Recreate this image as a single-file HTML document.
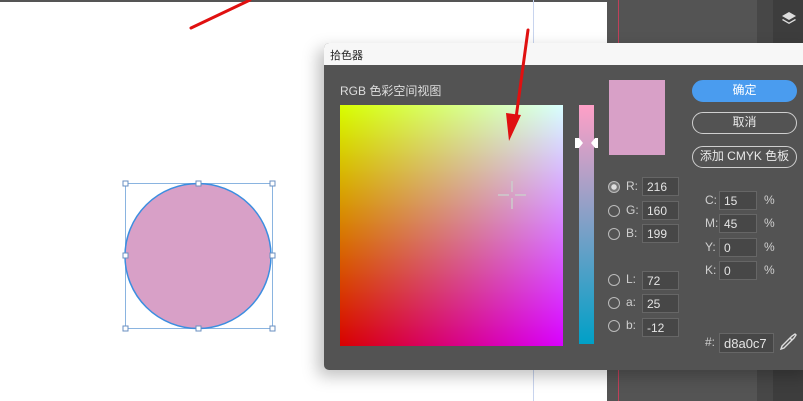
<!DOCTYPE html>
<html><head><meta charset="utf-8"><style>
*{margin:0;padding:0;box-sizing:border-box}
body{width:803px;height:401px;overflow:hidden;position:relative;background:#fff;font-family:"Liberation Sans","Noto Sans CJK SC",sans-serif;color:#d8d8d8}
.a{position:absolute}
.inp{position:absolute;background:#474747;border:1px solid #666;height:19px;font-size:12px;color:#e4e4e4;padding:2px 0 0 4px}
.lb{position:absolute;font-size:12px;color:#cfcfcf}
.rd{position:absolute;width:12px;height:12px;border:1px solid #bbb;border-radius:50%}
.btn{position:absolute;left:692px;width:105px;height:22px;border-radius:11px;border:1.5px solid #cfcfcf;font-size:12px;color:#e8e8e8;text-align:center;line-height:19px}
</style></head><body>
<div class="a" style="left:0;top:0;width:607px;height:2px;background:#555"></div>
<div class="a" style="left:533px;top:0;width:1px;height:401px;background:#c8d4ee"></div>
<!-- right dark panels -->
<div class="a" style="left:607px;top:0;width:150px;height:401px;background:#545454"></div>
<div class="a" style="left:618px;top:0;width:1px;height:401px;background:#c0405a"></div>
<div class="a" style="left:757px;top:0;width:16px;height:401px;background:#474747"></div>
<div class="a" style="left:773px;top:0;width:30px;height:401px;background:#3d3d3d"></div>
<svg class="a" style="left:780px;top:10px" width="18" height="18" viewBox="0 0 18 18"><path d="M9 2 L16 6 L9 10 L2 6Z" fill="#ddd"/><path d="M3 9 L9 12.5 L15 9 L16 10 L9 14 L2 10Z" fill="#ddd"/></svg>
<!-- circle -->
<svg class="a" style="left:118px;top:176px" width="162" height="160">
<rect x="7.5" y="7.5" width="147" height="145" fill="none" stroke="#8ab4e0" stroke-width="1"/>
<ellipse cx="80" cy="80" rx="73" ry="72.5" fill="#d8a0c7" stroke="#3c8ee0" stroke-width="1.5"/>
<g fill="#fff" stroke="#6a8fc0" stroke-width="1">
<rect x="5" y="5" width="5" height="5"/><rect x="78" y="5" width="5" height="5"/><rect x="152" y="5" width="5" height="5"/>
<rect x="5" y="77" width="5" height="5"/><rect x="152" y="77" width="5" height="5"/>
<rect x="5" y="150" width="5" height="5"/><rect x="78" y="150" width="5" height="5"/><rect x="152" y="150" width="5" height="5"/></g></svg>
<!-- dialog -->
<div class="a" style="left:324px;top:43px;width:490px;height:327px;background:#535353;border-radius:5px;box-shadow:-6px 6px 16px rgba(0,0,0,.25)">
<div style="height:22px;background:#f7f7f7;border-radius:5px 5px 0 0;font-size:11px;color:#222;padding:4px 0 0 6px">拾色器</div>
</div>
<div class="lb" style="left:340px;top:82px;font-size:12px;color:#ddd">RGB 色彩空间视图</div>
<div class="a" style="left:340px;top:105px;width:223px;height:241px;background-color:#d80000;background-image:linear-gradient(to right,#000,#00f),linear-gradient(to bottom,#0f0,#000);background-blend-mode:screen"></div>
<svg class="a" style="left:497px;top:180px" width="30" height="30"><g stroke="#ccc" stroke-width="1.5"><path d="M1 15h11M18 15h11M15 1v11M15 18v11"/></g></svg>
<div class="a" style="left:579px;top:105px;width:15px;height:239px;background:linear-gradient(#ffa0c7,#00a0c7)"></div>
<svg class="a" style="left:573px;top:137px" width="27" height="12"><path d="M2 1h4l4 5-4 5H2Z" fill="#fff"/><path d="M25 1h-3l-4 5 4 5h3Z" fill="#fff"/></svg>
<div class="a" style="left:609px;top:80px;width:56px;height:75px;background:#d8a0c7"></div>
<div class="btn" style="top:80px;background:#4a9cef;border-color:#4a9cef;color:#fff">确定</div>
<div class="btn" style="top:112px">取消</div>
<div class="btn" style="top:146px">添加 CMYK 色板</div>
<!-- RGB / Lab -->
<div class="rd" style="left:608px;top:181px;background:radial-gradient(#ddd 2.5px,#777 3px)"></div>
<div class="lb" style="left:626px;top:179px">R:</div><div class="inp" style="left:642px;top:177px;width:37px">216</div>
<div class="rd" style="left:608px;top:205px"></div>
<div class="lb" style="left:626px;top:203px">G:</div><div class="inp" style="left:642px;top:201px;width:37px">160</div>
<div class="rd" style="left:608px;top:228px"></div>
<div class="lb" style="left:626px;top:226px">B:</div><div class="inp" style="left:642px;top:224px;width:37px">199</div>
<div class="rd" style="left:608px;top:274px"></div>
<div class="lb" style="left:626px;top:272px">L:</div><div class="inp" style="left:642px;top:271px;width:37px">72</div>
<div class="rd" style="left:608px;top:297px"></div>
<div class="lb" style="left:626px;top:295px">a:</div><div class="inp" style="left:642px;top:294px;width:37px">25</div>
<div class="rd" style="left:608px;top:320px"></div>
<div class="lb" style="left:626px;top:318px">b:</div><div class="inp" style="left:642px;top:318px;width:37px">-12</div>
<!-- CMYK -->
<div class="lb" style="left:705px;top:193px">C:</div><div class="inp" style="left:719px;top:191px;width:38px">15</div><div class="lb" style="left:764px;top:193px">%</div>
<div class="lb" style="left:705px;top:216px">M:</div><div class="inp" style="left:719px;top:214px;width:38px">45</div><div class="lb" style="left:764px;top:216px">%</div>
<div class="lb" style="left:705px;top:240px">Y:</div><div class="inp" style="left:719px;top:238px;width:38px">0</div><div class="lb" style="left:764px;top:240px">%</div>
<div class="lb" style="left:705px;top:263px">K:</div><div class="inp" style="left:719px;top:261px;width:38px">0</div><div class="lb" style="left:764px;top:263px">%</div>
<div class="lb" style="left:705px;top:335px">#:</div><div class="inp" style="left:719px;top:333px;width:55px;height:20px;font-size:13px">d8a0c7</div>
<svg class="a" style="left:778px;top:332px" width="20" height="20"><path d="M3 17l1-3 8-8 2 2-8 8z M12 6l2-2 3-2 1 1-2 3-2 2" fill="none" stroke="#ddd" stroke-width="1.4"/></svg>
<!-- arrows -->
<svg class="a" style="left:0;top:0" width="803" height="401">
<path d="M191 28 L250 0" stroke="#e01010" stroke-width="3" stroke-linecap="round"/>
<path d="M528 30 L516 118" stroke="#e01010" stroke-width="3" stroke-linecap="round"/>
<path d="M506 113 L521 115 L509 141Z" fill="#e01010"/>
</svg>
</body></html>
